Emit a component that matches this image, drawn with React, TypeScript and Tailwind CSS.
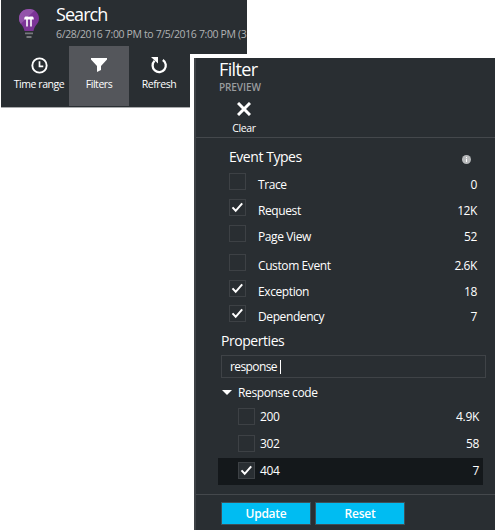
import type { ReactNode } from "react";

type Row = { label: string; count: string; checked?: boolean; height: string };

const eventTypes: Row[] = [
  { label: "Trace", count: "0", height: "h-[26px]" },
  { label: "Request", count: "12K", checked: true, height: "h-[26px]" },
  { label: "Page View", count: "52", height: "h-[29px]" },
  { label: "Custom Event", count: "2.6K", height: "h-[26px]" },
  { label: "Exception", count: "18", checked: true, height: "h-[25px]" },
  { label: "Dependency", count: "7", checked: true, height: "h-[26px]" },
];

const codes = [
  { label: "200", count: "4.9K", checked: false },
  { label: "302", count: "58", checked: false },
  { label: "404", count: "7", checked: true },
];

function Checkbox({ checked }: { checked?: boolean }) {
  return (
    <span className="block size-[17px] shrink-0 border border-[#3d4145] bg-[#292e32]">
      {checked && (
        <svg viewBox="0 0 15 15" className="block size-[15px]" fill="none" stroke="#fff" strokeWidth="2">
          <path d="M2.5 7.4 5.7 10.8 12.2 3.4" />
        </svg>
      )}
    </span>
  );
}

function Tool({ label, active, children }: { label: string; active?: boolean; children: ReactNode }) {
  return (
    <div className={`flex h-[60px] w-[60px] flex-col items-center pt-[9px] ${active ? "bg-[#54565b]" : ""}`}>
      <div className="flex h-5 items-center">{children}</div>
      <span className="mt-px whitespace-nowrap text-[10.5px] font-medium leading-4 tracking-[-0.45px]">{label}</span>
    </div>
  );
}

function SearchPanel() {
  return (
    <section className="ml-px h-[108px] w-[246px] overflow-hidden border-b border-[#a9abad] bg-[#292e32]">
      <header className="flex h-[46px] pl-[17px]">
        <svg viewBox="0 0 22 32" className="mt-[8px] h-8 w-[22px] shrink-0">
          <path d="M11 1C5 1 1 5.200 1 10.500c0 5.500 4.500 6.500 5.500 12.500h9C16.500 17 21 16 21 10.500 21 5.200 17 1 11 1Z" fill="#7c3497" />
          <path d="M11 1C5 1 1 5.200 1 10.500c0 2.300.8 3.900 1.800 5.200L16.500 2.500C15 1.500 13 1 11 1Z" fill="#9353aa" />
          <path d="M9 18.500V9.500M13 18.500V9.500" fill="none" stroke="#fff" strokeWidth="1.600" />
          <path d="M6.200 11.500C6.200 7.700 8 8.700 11 8.700s4.800-1 4.800 2.800Z" fill="#fff" />
          <path d="M7 25.300h8M8.500 29h5" stroke="#77797d" strokeWidth="1.800" />
        </svg>
        <div className="ml-4 whitespace-nowrap">
          <h1 className="mt-[2px] text-[18px] leading-6 tracking-[-0.95px]">Search</h1>
          <p className="text-[10.5px] font-medium leading-4 tracking-[-0.36px] text-[#b0b2b4]">6/28/2016 7:00 PM to 7/5/2016 7:00 PM (3</p>
        </div>
      </header>
      <nav className="flex pl-2">
        <Tool label="Time range">
          <svg viewBox="0 0 18 18" className="size-[17px]" fill="none" stroke="#fff" strokeWidth="2">
            <circle cx="9" cy="9" r="7.600" />
            <path d="M9 4.500V10H13" strokeWidth="1.800" />
          </svg>
        </Tool>
        <Tool label="Filters" active>
          <svg viewBox="0 0 16 14" className="h-[14px] w-4" fill="#fff">
            <path d="M0 0h16v1.500L10 8v4l-4 2V8L0 1.500Z" />
          </svg>
        </Tool>
        <Tool label="Refresh">
          <svg viewBox="0 0 18 18" className="size-[18px]">
            <path d="M12.800 4A6.600 6.600 0 1 1 4.600 4.800" fill="none" stroke="#fff" strokeWidth="2.300" />
            <path d="M1 1h7v6.500Z" fill="#fff" />
          </svg>
        </Tool>
      </nav>
    </section>
  );
}

function FilterPanel() {
  return (
    <section className="absolute left-[190px] top-[54px] h-[476px] w-[305px] border-l-4 border-t-4 border-white">
      <div className="flex h-[472px] flex-col border-l-2 border-[#3e4246] bg-[#292e32]">
        <header className="h-20 shrink-0 border-b border-[#44484c] pl-[23px]">
          <h2 className="text-[18px] leading-[22px] tracking-[-0.65px]">Filter</h2>
          <p className="mt-px text-[10px] font-semibold leading-3 tracking-[-0.1px] text-[#999c9e]">PREVIEW</p>
          <div className="mt-[9px] flex w-[50px] flex-col items-center">
            <svg viewBox="0 0 14 14" className="size-[14px]" stroke="#fff" strokeWidth="3">
              <path d="m1 1 12 12M13 1 1 13" />
            </svg>
            <span className="mt-[4px] text-[10.5px] font-medium leading-4 tracking-[-0.35px]">Clear</span>
          </div>
        </header>

        <div className="flex h-[35px] shrink-0 items-start justify-between pl-[33px] pr-6 pt-[9px]">
          <h3 className="text-[14px] leading-5 tracking-[-0.45px]">Event Types</h3>
          <svg viewBox="0 0 9 9" className="mt-[8px] size-[9px]">
            <circle cx="4.500" cy="4.500" r="4.500" fill="#b7b9bb" />
            <path d="M4.500 2v1M4.500 3.800V7" stroke="#fff" />
          </svg>
        </div>

        <ul className="shrink-0 pl-[33px] pr-[18px] text-[12px] font-medium tracking-[-0.4px]">
          {eventTypes.map((r) => (
            <li key={r.label} className={`flex items-start ${r.height}`}>
              <Checkbox checked={r.checked} />
              <span className="ml-3 mt-[4px] leading-4">{r.label}</span>
              <span className="ml-auto mt-[4px] leading-4">{r.count}</span>
            </li>
          ))}
        </ul>

        <h3 className="h-[24px] shrink-0 pl-[25px] text-[14px] leading-5 tracking-[-0.45px]">Properties</h3>
        <div className="ml-[25px] flex h-[23px] w-[265px] shrink-0 items-center border border-[#3f4347] pl-2 text-[12px] font-medium leading-4 tracking-[-0.6px]">
          response<span className="ml-[3px] h-[14px] w-px bg-white" />
        </div>
        <div className="flex h-[26px] shrink-0 items-center pl-[26px] pt-[3px] text-[12px] font-medium leading-4 tracking-[-0.36px]">
          <svg viewBox="0 0 10 5" className="mr-[6px] h-[5px] w-[10px]" fill="#fff">
            <path d="M0 0h10L5 5Z" />
          </svg>
          Response code
        </div>
        <ul className="w-[287px] shrink-0 pl-[22px] text-[12px] font-medium tracking-[-0.3px]">
          {codes.map((c) => (
            <li key={c.label} className={`flex h-[27px] items-start pl-5 pr-1 pt-[4px] ${c.checked ? "bg-[#14181b]" : ""}`}>
              <Checkbox checked={c.checked} />
              <span className="ml-[5px] mt-px leading-4">{c.label}</span>
              <span className="ml-auto mt-px leading-4">{c.count}</span>
            </li>
          ))}
        </ul>

        <footer className="mt-[9px] flex gap-1 border-t border-[#44484c] pl-[25px] pt-[7px] text-[12px] font-semibold tracking-[-0.25px] text-white">
          <button className="h-[23px] w-[90px] border border-[#3f5058] bg-[#00bcf2] leading-5">Update</button>
          <button className="h-[23px] w-[90px] border border-[#3f5058] bg-[#00bcf2] leading-5">Reset</button>
        </footer>
      </div>
    </section>
  );
}

export default function App() {
  return (
    <main className="relative h-[530px] w-[495px] overflow-hidden bg-white font-['Open_Sans','Noto_Sans',sans-serif] text-white">
      <SearchPanel />
      <FilterPanel />
    </main>
  );
}
